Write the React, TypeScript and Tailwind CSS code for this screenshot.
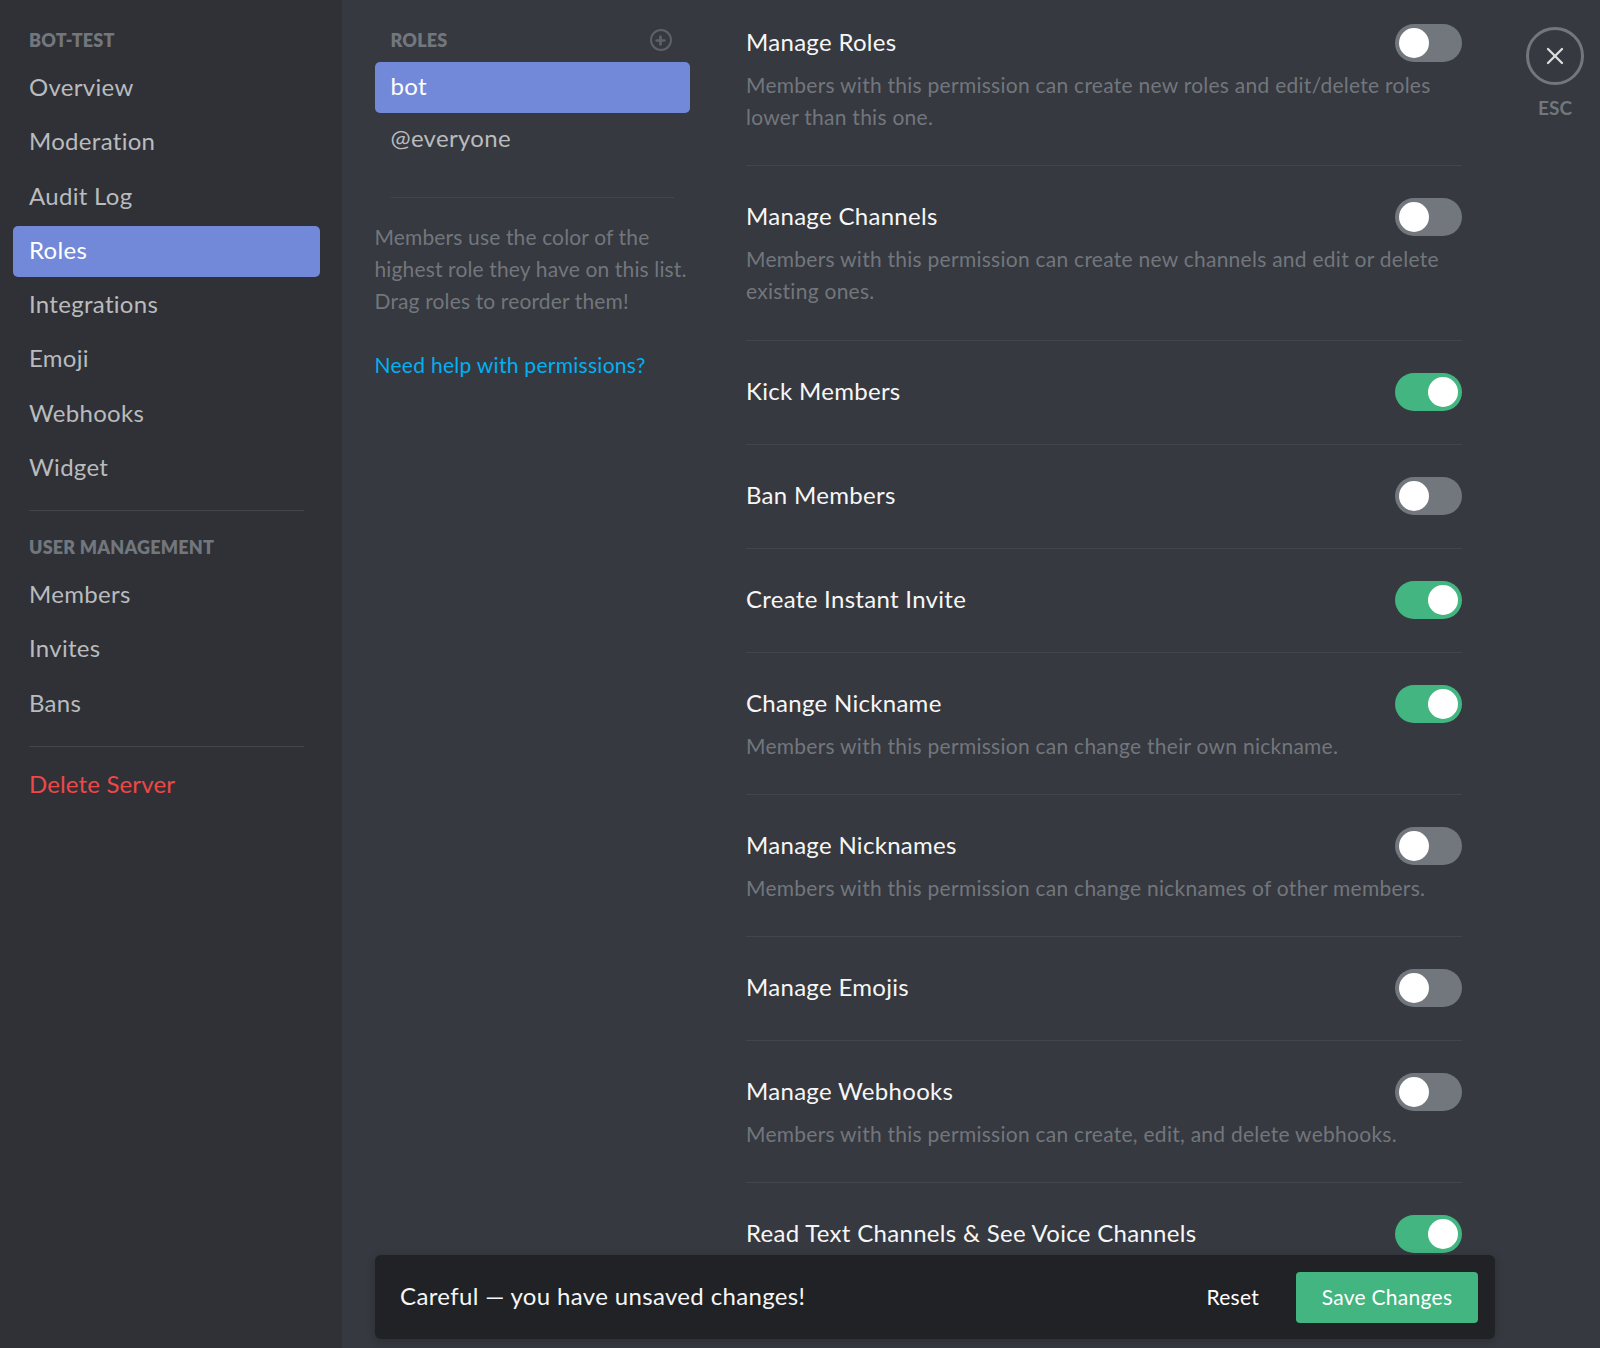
import { X, Plus } from "lucide-react";

const font = "font-['Lato','Open_Sans',sans-serif]";

const serverItems = ["Overview", "Moderation", "Audit Log", "Roles", "Integrations", "Emoji", "Webhooks", "Widget"];
const userItems = ["Members", "Invites", "Bans"];

const permissions = [
  { name: "Manage Roles", on: false, desc: "Members with this permission can create new roles and edit/delete roles lower than this one." },
  { name: "Manage Channels", on: false, desc: "Members with this permission can create new channels and edit or delete existing ones." },
  { name: "Kick Members", on: true },
  { name: "Ban Members", on: false },
  { name: "Create Instant Invite", on: true },
  { name: "Change Nickname", on: true, desc: "Members with this permission can change their own nickname." },
  { name: "Manage Nicknames", on: false, desc: "Members with this permission can change nicknames of other members." },
  { name: "Manage Emojis", on: false },
  { name: "Manage Webhooks", on: false, desc: "Members with this permission can create, edit, and delete webhooks." },
  { name: "Read Text Channels & See Voice Channels", on: true },
];

function Toggle({ on }: { on: boolean }) {
  return (
    <div className={`flex h-[38px] w-[67px] shrink-0 items-center rounded-full px-1 ${on ? "justify-end bg-[#43b581]" : "justify-start bg-[#72767d]"}`}>
      <div className="h-[30px] w-[30px] rounded-full bg-white" />
    </div>
  );
}

function NavItem({ label, active }: { label: string; active?: boolean }) {
  return (
    <div className={`flex h-[51px] items-center rounded-[5px] px-4 pb-[3px] text-[24px] tracking-[0.3px] ${active ? "bg-[#7289da] text-white" : "text-[#b9bbbe]"}`}>
      {label}
    </div>
  );
}

function Heading({ children }: { children: string }) {
  return <div className="text-[18px] font-extrabold leading-[24px] tracking-[0.2px] text-[#72767d]">{children}</div>;
}

export default function App() {
  return (
    <div className={`relative flex h-[1348px] w-[1600px] overflow-hidden bg-[#36393f] ${font}`}>
      <aside className="h-full w-[342px] shrink-0 bg-[#2f3136] pl-[13px] pr-[22px] pt-[28px]">
        <div className="px-4 pb-[11px]"><Heading>BOT-TEST</Heading></div>
        <div className="flex flex-col gap-[3.3px]">
          {serverItems.map((item) => (
            <NavItem key={item} label={item} active={item === "Roles"} />
          ))}
        </div>
        <div className="mx-4 mb-[24px] mt-[16px] h-px bg-[#42454a]" />
        <div className="px-4 pb-[11px]"><Heading>USER MANAGEMENT</Heading></div>
        <div className="flex flex-col gap-[3.3px]">
          {userItems.map((item) => (
            <NavItem key={item} label={item} />
          ))}
        </div>
        <div className="mx-4 mb-[12px] mt-[16px] h-px bg-[#42454a]" />
        <div className="flex h-[51px] items-center px-4 text-[24px] tracking-[0.15px] text-[#f04747]">Delete Server</div>
      </aside>

      <section className="w-[404px] shrink-0 pl-[32.5px] pr-[56px] pt-[28px]">
        <div className="flex items-center justify-between pl-4 pr-[18.5px] pb-[10px]">
          <Heading>ROLES</Heading>
          <div className="flex h-[22px] w-[22px] items-center justify-center rounded-full border-2 border-[#5e6268]">
            <Plus size={13} strokeWidth={5} className="text-[#5e6268]" />
          </div>
        </div>
        <div className="w-[315.5px]">
          <NavItem label="bot" active />
          <div className="flex h-[51px] items-center px-4 pb-[2px] text-[24px] tracking-[0.3px] text-[#b9bbbe]">@everyone</div>
          <div className="mx-4 mt-[33px] h-px bg-[#42454a]" />
          <p className="mt-[23px] w-[320px] text-[21px] leading-[32px] tracking-[0.14px] text-[#72767d]">
            Members use the color of the highest role they have on this list. Drag roles to reorder them!
          </p>
          <div className="mt-[32px] whitespace-nowrap text-[21px] leading-[32px] tracking-[0.28px] text-[#00b0f4]">Need help with permissions?</div>
        </div>
      </section>

      <main className="w-[716px] shrink-0 pt-[24px]">
        {permissions.map((p, i) => (
          <div key={p.name} className={i < permissions.length - 1 ? `mb-[32px] border-b border-[#42454a] ${p.desc ? "pb-[32px]" : "pb-[33px]"}` : ""}>
            <div className="flex items-center justify-between">
              <div className="pb-[2px] text-[24px] tracking-[0.3px] text-[#f6f6f7]">{p.name}</div>
              <Toggle on={p.on} />
            </div>
            {p.desc && <p className="mt-[7px] text-[21px] leading-[32.15px] tracking-[0.26px] text-[#72767d]">{p.desc}</p>}
          </div>
        ))}
      </main>

      <div className="ml-[64px] mt-[27px] flex flex-col items-center">
        <div className="flex h-[58px] w-[58px] items-center justify-center rounded-full border-[3px] border-[#72767d]">
          <X size={28} strokeWidth={2} className="text-[#dcddde]" />
        </div>
        <div className="mt-[11px] text-[19px] font-bold leading-[24px] text-[#72767d]">ESC</div>
      </div>

      <div className="absolute left-[375px] top-[1255px] flex h-[84px] w-[1120px] items-center justify-between rounded-[6px] bg-[#202225] pl-[25px] pr-[17px] shadow-[0_2px_10px_rgba(0,0,0,0.2)]">
        <div className="pb-[3px] text-[24px] tracking-[0.35px] text-[#f6f6f7]">Careful — you have unsaved changes!</div>
        <div className="flex items-center gap-[37px]">
          <div className="text-[21px] tracking-[0.28px] text-white">Reset</div>
          <div className="flex h-[51px] w-[182px] items-center justify-center rounded-[4px] bg-[#43b581] text-[21px] tracking-[0.28px] text-white">Save Changes</div>
        </div>
      </div>
    </div>
  );
}
